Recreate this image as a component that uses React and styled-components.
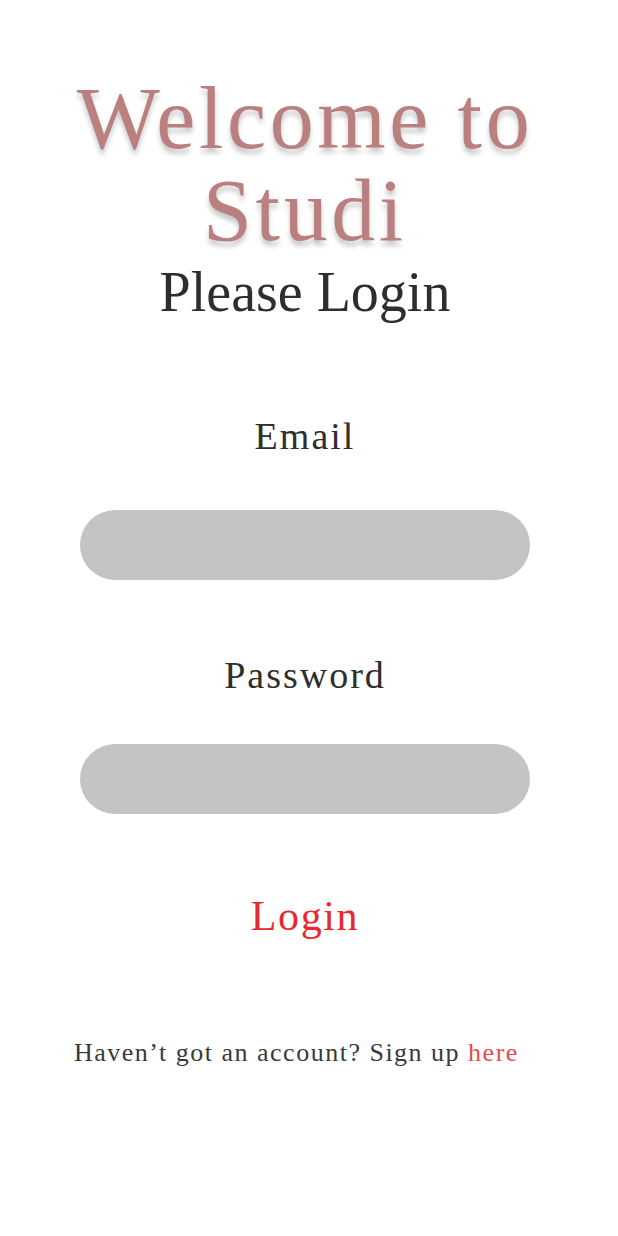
import React from 'react'
import styled, { createGlobalStyle } from 'styled-components'

const GlobalStyle = createGlobalStyle`
  body {
    margin: 0;
    background: #ffffff;
    font-family: "Liberation Serif", "DejaVu Serif", serif;
  }
`

const Page = styled.div`
  width: 610px;
  min-height: 1236px;
  display: flex;
  flex-direction: column;
  align-items: center;
`

const Title = styled.h1`
  margin: 73px 0 0;
  font-size: 88px;
  line-height: 92px;
  letter-spacing: 3.6px;
  font-weight: 400;
  text-align: center;
  color: #ba7f7f;
  text-shadow: 0 5px 5px rgba(0, 0, 0, 0.22);
`

const Subtitle = styled.h2`
  margin: 5px 0 0;
  font-size: 56px;
  line-height: 60px;
  font-weight: 400;
  color: #2e2e2e;
`

const Label = styled.label`
  margin-top: ${p => p.$gap}px;
  font-size: 38px;
  line-height: 44px;
  letter-spacing: 2px;
  color: #2e2e2e;
`

const Field = styled.input`
  margin-top: ${p => p.$gap}px;
  width: 450px;
  height: 70px;
  box-sizing: border-box;
  border: none;
  border-radius: 35px;
  background: #c4c4c4;
  padding: 0 30px;
  font: inherit;
  font-size: 24px;
  outline: none;
`

const LoginButton = styled.button`
  margin-top: 78px;
  border: none;
  background: none;
  padding: 0;
  font: inherit;
  font-size: 42px;
  line-height: 48px;
  letter-spacing: 1.6px;
  color: #e52b2b;
  cursor: pointer;
`

const Footer = styled.p`
  align-self: flex-start;
  margin: 98px 0 0 74px;
  font-size: 26px;
  line-height: 30px;
  letter-spacing: 1.5px;
  color: #3a3a3a;
`

const SignupLink = styled.a`
  color: #ea4b4b;
  text-decoration: none;
`

export default function App() {
  return (
    <>
      <GlobalStyle />
      <Page>
        <Title>
          Welcome to
          <br />
          Studi
        </Title>
        <Subtitle>Please Login</Subtitle>
        <Label htmlFor="email" $gap={92}>Email</Label>
        <Field id="email" type="email" $gap={52} />
        <Label htmlFor="password" $gap={73}>Password</Label>
        <Field id="password" type="password" $gap={47} />
        <LoginButton type="submit">Login</LoginButton>
        <Footer>
          Haven’t got an account? Sign up <SignupLink href="#">here</SignupLink>
        </Footer>
      </Page>
    </>
  )
}
